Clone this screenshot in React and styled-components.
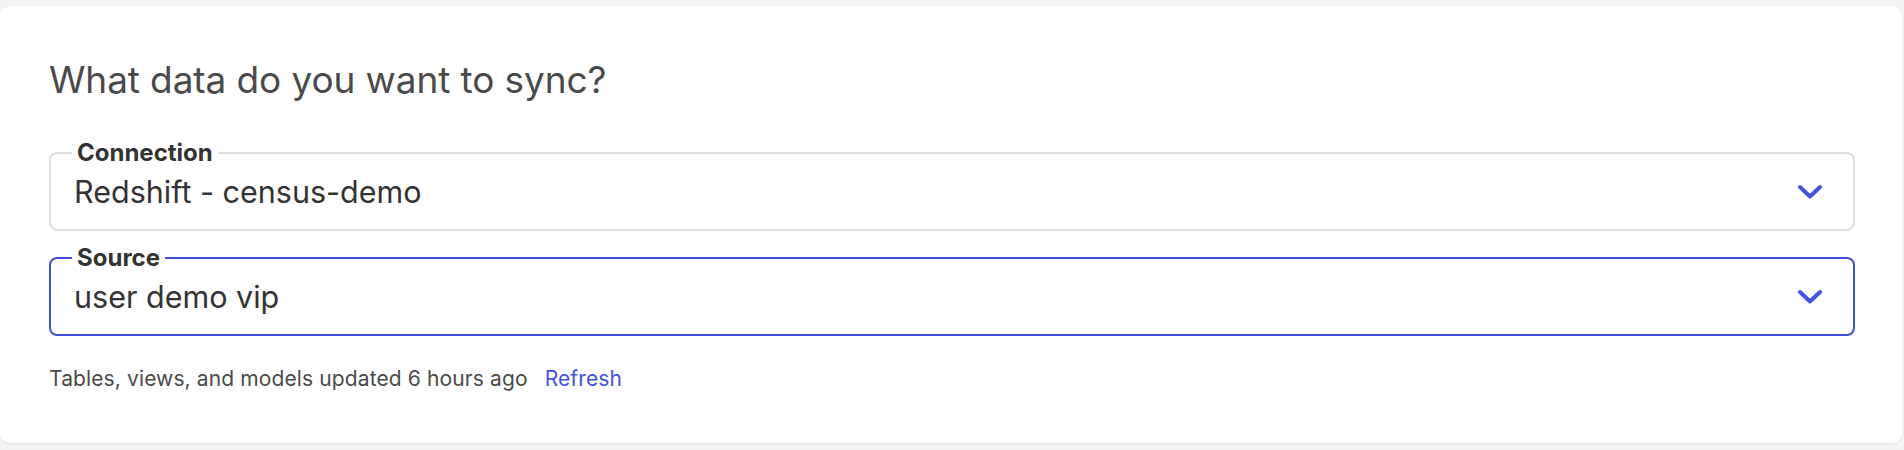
import React from "react";
import styled, { createGlobalStyle } from "styled-components";

const Global = createGlobalStyle`
  html, body { margin: 0; padding: 0; background: #f3f4f6; }
  body { font-family: Inter, "Noto Sans", "Liberation Sans", sans-serif; }
  * { box-sizing: border-box; }
`;

const Page = styled.div`
  padding: 6px 2px 7px 0;
`;

const Card = styled.section`
  background: #ffffff;
  border-radius: 10px;
  box-shadow: 0 1px 3px rgba(0, 0, 0, 0.08);
  padding: 52px 47px 51px 49px;
  display: flex;
  flex-direction: column;
`;

const Heading = styled.h2`
  margin: 0 0 39px;
  font-size: 37px;
  line-height: 44px;
  font-weight: 400;
  color: #4a4a4a;
  letter-spacing: -0.1px;
`;

const Field = styled.fieldset`
  margin: 0 0 ${(p) => p.$gap}px;
  padding: 4px 30px 14px 23px;
  border: 2px solid ${(p) => (p.$active ? "#3f4fd8" : "#dedede")};
  border-radius: 8px;
  min-width: 0;
`;

const Legend = styled.legend`
  padding: 0 5px;
  margin-left: -2px;
  font-size: 24px;
  line-height: 24px;
  font-weight: 700;
  color: #333333;
`;

const Row = styled.div`
  display: flex;
  align-items: center;
  justify-content: space-between;
  height: 46px;
`;

const Value = styled.span`
  font-size: 30.5px;
  line-height: 40px;
  color: #333333;
`;

const Chevron = () => (
  <svg width="26" height="18" viewBox="0 0 26 18" fill="none">
    <path
      d="M3 4 L13 13.5 L23 4"
      stroke="#4353dd"
      strokeWidth="4"
      strokeLinecap="round"
      strokeLinejoin="round"
    />
  </svg>
);

const Footer = styled.p`
  margin: 30px 0 0;
  font-size: 21px;
  line-height: 26px;
  letter-spacing: 0.12px;
  color: #4a4a4a;
  display: flex;
  gap: 17px;
`;

const Link = styled.a`
  color: #4353dd;
  text-decoration: none;
  cursor: pointer;
`;

function SelectField({ label, value, active, gap }) {
  return (
    <Field $active={active} $gap={gap}>
      <Legend>{label}</Legend>
      <Row>
        <Value>{value}</Value>
        <Chevron />
      </Row>
    </Field>
  );
}

export default function App() {
  return (
    <Page>
      <Global />
      <Card>
        <Heading>What data do you want to sync?</Heading>
        <SelectField label="Connection" value="Redshift - census-demo" gap={15} />
        <SelectField label="Source" value="user demo vip" active gap={0} />
        <Footer>
          <span>Tables, views, and models updated 6 hours ago</span>
          <Link>Refresh</Link>
        </Footer>
      </Card>
    </Page>
  );
}
